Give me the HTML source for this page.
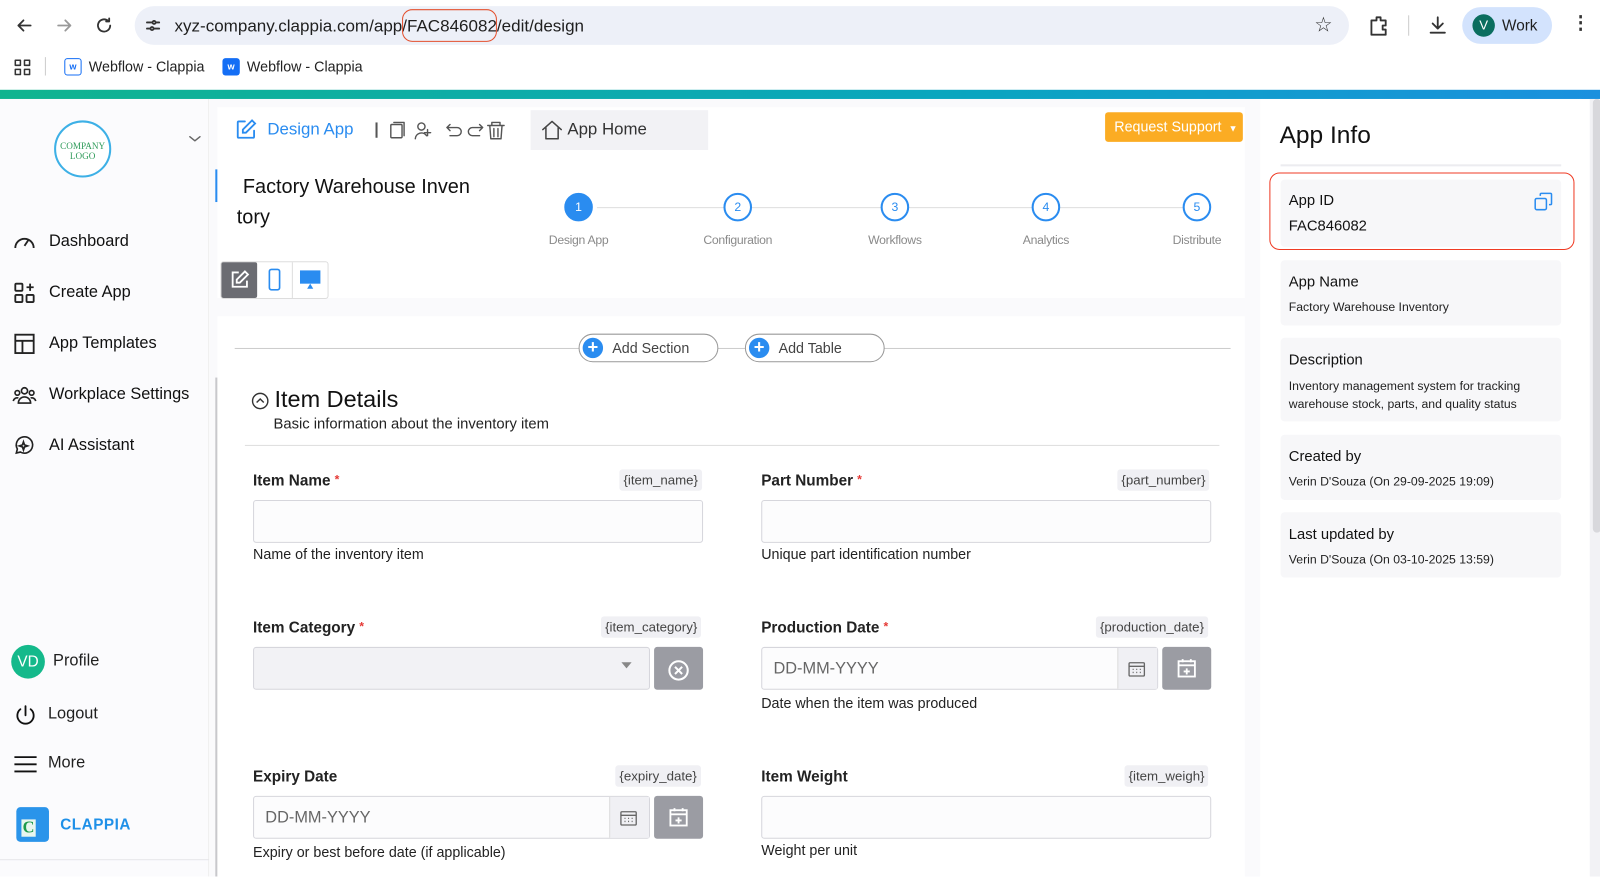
<!DOCTYPE html>
<html><head><meta charset="utf-8">
<style>
*{box-sizing:border-box;margin:0;padding:0}
html,body{width:1600px;height:876px;overflow:hidden}
body{font-family:"Liberation Sans",Arial,sans-serif;background:#fff;color:#1f1f1f}
#w{position:absolute;left:0;top:0;width:1568px;height:859px;transform:scale(1.0204);transform-origin:0 0;overflow:hidden}
.abs{position:absolute}
.ic{position:absolute;fill:none;stroke:#333;stroke-width:1.8;stroke-linecap:round;stroke-linejoin:round}
.nav{position:absolute;left:12px;font-size:16px;color:#111;display:flex;align-items:center;gap:12px}
.lbl{position:absolute;font-size:15px;font-weight:bold;color:#222}
.req{color:#e53935;font-size:12px;vertical-align:top;margin-left:4px}
.tag{position:absolute;font-size:13px;color:#444;background:#f0f0f4;padding:3px 4px;border-radius:3px}
.inp{position:absolute;height:42px;border:1px solid #d6d6dc;border-radius:3px;background:#fcfcfd}
.help{position:absolute;font-size:14px;color:#222}
.card{position:absolute;left:1255px;width:275px;background:#f7f7f9;border-radius:4px}
.card .t{position:absolute;left:8px;font-size:14.5px;color:#111}
.card .v{position:absolute;left:8px;font-size:12px;color:#222;line-height:18px}
.step{position:absolute;width:28px;height:28px;border-radius:50%;border:2px solid #2a8cf0;color:#2a8cf0;font-size:12px;display:flex;align-items:center;justify-content:center;background:#fff;top:189px}
.sl{position:absolute;top:228px;font-size:12px;color:#8a8a8a;transform:translateX(-50%);letter-spacing:-0.3px}
.btn{position:absolute;background:#9b9ca3;border-radius:3px;width:48px;height:42px}
</style></head><body><div id="w">
<div class="abs" style="left:0;top:0;width:1600px;height:88px;background:#fff"></div>
<svg class="ic" style="left:14px;top:15px" width="20" height="20" viewBox="0 0 20 20"><path d="M16 10H4M9 5l-5 5 5 5"/></svg>
<svg class="ic" style="left:53px;top:15px;stroke:#999" width="20" height="20" viewBox="0 0 20 20"><path d="M4 10h12M11 5l5 5-5 5"/></svg>
<svg class="ic" style="left:92px;top:15px" width="20" height="20" viewBox="0 0 20 20"><path d="M16 10a6 6 0 1 1-2-4.5M15 3v3h-3"/></svg>
<div class="abs" style="left:132px;top:6px;width:1190px;height:38px;border-radius:19px;background:#edf0f8"></div>
<svg class="ic" style="left:140px;top:15px" width="20" height="20" viewBox="0 0 20 20"><path d="M4 7h5M13 7h3M4 13h3M11 13h5"/><circle cx="11" cy="7" r="1.5"/><circle cx="9" cy="13" r="1.5"/></svg>
<div class="abs" style="left:171px;top:16px;font-size:16.7px;color:#1f1f1f">xyz-company.clappia.com/app/FAC846082/edit/design</div>
<div class="abs" style="left:394px;top:9px;width:93px;height:32px;border:1.5px solid #e4502e;border-radius:10px"></div>
<div class="abs" style="left:1288px;top:12px;font-size:20px;color:#333">☆</div>
<svg class="ic" style="left:1340px;top:14px" width="22" height="22" viewBox="0 0 22 22"><path d="M4 6h5V3h4v3h5v5h-3v4h3v5H4z"/></svg>
<div class="abs" style="left:1380px;top:15px;width:1px;height:20px;background:#ccc"></div>
<svg class="ic" style="left:1398px;top:14px" width="22" height="22" viewBox="0 0 22 22"><path d="M11 3v11M6 9l5 5 5-5M4 18h14"/></svg>
<div class="abs" style="left:1433px;top:7px;width:88px;height:36px;border-radius:18px;background:#d3e3fd"></div>
<div class="abs" style="left:1443px;top:14px;width:22px;height:22px;border-radius:50%;background:#0b6e5f;color:#fff;font-size:13px;text-align:center;line-height:22px">V</div>
<div class="abs" style="left:1472px;top:17px;font-size:15px;color:#1f1f1f">Work</div>
<div class="abs" style="left:1540px;top:12px;font-size:18px;color:#333;font-weight:bold">⋮</div>
<svg class="ic" style="left:13px;top:57px;stroke-width:1.5" width="18" height="18" viewBox="0 0 18 18"><rect x="2" y="2" width="5" height="5"/><rect x="11" y="2" width="5" height="5"/><rect x="2" y="11" width="5" height="5"/><rect x="11" y="11" width="5" height="5"/></svg>
<div class="abs" style="left:44px;top:56px;width:1px;height:18px;background:#ccc"></div>
<div class="abs" style="left:63px;top:57px;width:17px;height:17px;background:#fff;border:1.5px solid #146ef5;border-radius:3px;color:#146ef5;font-size:9px;font-weight:bold;text-align:center;line-height:14px">w</div>
<div class="abs" style="left:87px;top:57px;font-size:14px;color:#222">Webflow - Clappia</div>
<div class="abs" style="left:218px;top:57px;width:17px;height:17px;background:#146ef5;border-radius:3px;color:#fff;font-size:9px;font-weight:bold;text-align:center;line-height:17px">w</div>
<div class="abs" style="left:242px;top:57px;font-size:14px;color:#222">Webflow - Clappia</div>
<div class="abs" style="left:0;top:88px;width:1600px;height:9px;background:linear-gradient(90deg,#10b48f,#0aa5c0 60%,#1c8fe0)"></div>
<div class="abs" style="left:1558px;top:97px;width:42px;height:779px;background:#f2f2f5"></div>
<div class="abs" style="left:1561px;top:97px;width:8px;height:425px;background:#d8d8dc;border-radius:4px"></div>
<div class="abs" style="left:0;top:97px;width:205px;height:779px;background:#fbfbfd;border-right:1px solid #eee"></div>
<div class="abs" style="left:53px;top:118px;width:56px;height:56px;border-radius:50%;border:2px solid #3db0e6;background:#fff;color:#2f9b5a;font-family:'Liberation Serif',serif;font-size:9px;text-align:center;padding-top:18px;line-height:10px">COMPANY<br>LOGO</div>
<svg class="ic" style="left:184px;top:131px;stroke:#666;stroke-width:1.4" width="14" height="10" viewBox="0 0 14 10"><path d="M2 3l5 4 5-4"/></svg>
<div class="nav" style="top:226px"><svg width="24" height="22" viewBox="0 0 24 22" style="fill:none;stroke:#222;stroke-width:1.8"><path d="M3 17a9 9 0 1 1 18 0"/><path d="M12 15l4-6"/></svg>Dashboard</div>
<div class="nav" style="top:276px"><svg width="24" height="22" viewBox="0 0 24 22" style="fill:none;stroke:#222;stroke-width:1.8"><rect x="3" y="2" width="7" height="7" rx="1"/><rect x="3" y="13" width="7" height="7" rx="1"/><rect x="14" y="13" width="7" height="7" rx="1"/><path d="M17.5 2v7M14 5.5h7"/></svg>Create App</div>
<div class="nav" style="top:326px"><svg width="24" height="22" viewBox="0 0 24 22" style="fill:none;stroke:#222;stroke-width:1.8"><rect x="3" y="2" width="18" height="18"/><path d="M3 8h18M10 8v12"/></svg>App Templates</div>
<div class="nav" style="top:376px"><svg width="24" height="22" viewBox="0 0 24 22" style="fill:none;stroke:#222;stroke-width:1.6"><circle cx="12" cy="7" r="3"/><circle cx="5" cy="9" r="2.3"/><circle cx="19" cy="9" r="2.3"/><path d="M6 19a6 6 0 0 1 12 0zM1 17a4 4 0 0 1 5-3M23 17a4 4 0 0 0-5-3"/></svg>Workplace Settings</div>
<div class="nav" style="top:426px"><svg width="24" height="22" viewBox="0 0 24 22" style="fill:none;stroke:#222;stroke-width:1.6"><path d="M4 18l1-4a8 8 0 1 1 3 3z"/><path d="M11 7l1 3 3 1-3 1-1 3-1-3-3-1 3-1z"/></svg>AI Assistant</div>
<div class="abs" style="left:11px;top:632px;width:33px;height:33px;border-radius:50%;background:#14b98b;color:#fff;font-size:15px;text-align:center;line-height:33px">VD</div>
<div class="abs" style="left:52px;top:639px;font-size:16px">Profile</div>
<svg class="abs" style="left:13px;top:689px" width="24" height="24" viewBox="0 0 24 24" fill="none" stroke="#111" stroke-width="1.8" stroke-linecap="round"><path d="M12 3v9M7 6a8 8 0 1 0 10 0"/></svg>
<div class="abs" style="left:47px;top:691px;font-size:16px">Logout</div>
<svg class="abs" style="left:14px;top:740px" width="22" height="18" viewBox="0 0 22 18" stroke="#111" stroke-width="1.8"><path d="M0 2h22M0 9h22M0 16h22"/></svg>
<div class="abs" style="left:47px;top:739px;font-size:16px">More</div>
<div class="abs" style="left:16px;top:791px;width:32px;height:34px;background:#2a94ea;border-radius:4px"></div>
<div class="abs" style="left:21px;top:803px;width:14px;height:17px;background:#e8f6ee;color:#1e9b4d;font-weight:bold;font-family:'Liberation Serif',serif;font-size:16px;line-height:17px;text-align:center">C</div>
<div class="abs" style="left:59px;top:800px;font-size:15px;font-weight:bold;color:#1e90e8;letter-spacing:.5px">CLAPPIA</div>
<div class="abs" style="left:0;top:842px;width:205px;height:1px;background:#e6e6ea"></div>
<div class="abs" style="left:205px;top:97px;width:1030px;height:779px;background:#fafafc"></div>
<div class="abs" style="left:213px;top:105px;width:1007px;height:187px;background:#fff"></div>
<svg class="abs" style="left:230px;top:116px" width="22" height="22" viewBox="0 0 22 22" fill="none" stroke="#2a8cf0" stroke-width="1.8" stroke-linecap="round"><path d="M10 3H4a1 1 0 0 0-1 1v14a1 1 0 0 0 1 1h14a1 1 0 0 0 1-1v-6"/><path d="M17 2l3 3-9 9H8v-3z"/></svg>
<div class="abs" style="left:262px;top:118px;font-size:16.5px;color:#2a8cf0">Design App</div>
<div class="abs" style="left:368px;top:120px;width:2px;height:15px;background:#555"></div>
<svg class="ic" style="left:378px;top:117px;stroke:#555;stroke-width:1.4" width="120" height="22" viewBox="0 0 120 22"><rect x="5" y="5" width="11" height="13" rx="1"/><path d="M8 3h10v13"/><circle cx="35" cy="7" r="3.5"/><path d="M29 19a6 6 0 0 1 11-3M41 10v6M38 13h6"/><path d="M60 8h10a4 4 0 0 1 0 8h-7M60 8l3-3M60 8l3 3"/><path d="M95 8H85a4 4 0 0 0 0 8h7M95 8l-3-3M95 8l-3 3"/><path d="M100 6h16M104 6V3h8v3M102 6l1 13h10l1-13M106 9v8M110 9v8"/></svg>
<div class="abs" style="left:520px;top:108px;width:174px;height:39px;background:#f2f2f5"></div>
<svg class="ic" style="left:530px;top:116px;stroke:#444;stroke-width:1.5" width="22" height="22" viewBox="0 0 22 22"><path d="M2 11L11 3l9 8M5 9v11h12V9"/></svg>
<div class="abs" style="left:556px;top:118px;font-size:16.5px;color:#333">App Home</div>
<div class="abs" style="left:1083px;top:110px;width:135px;height:29px;background:#fbac23;border-radius:3px;color:#fff;font-size:14px;line-height:29px;padding-left:9px">Request Support <span style="font-size:9px;margin-left:3px">▼</span></div>
<div class="abs" style="left:211px;top:166px;width:2px;height:32px;background:#2a8cf0"></div>
<div class="abs" style="left:238px;top:168px;font-size:19.5px;color:#111;line-height:30px">Factory Warehouse Inven</div>
<div class="abs" style="left:232px;top:198px;font-size:19.5px;color:#111;line-height:30px">tory</div>
<div class="abs" style="left:585px;top:203px;width:575px;height:1px;background:#ddd"></div>
<div class="step" style="left:553px;background:#2a8cf0;color:#fff">1</div>
<div class="step" style="left:709px">2</div>
<div class="step" style="left:863px">3</div>
<div class="step" style="left:1011px">4</div>
<div class="step" style="left:1159px">5</div>
<div class="sl" style="left:567px">Design App</div>
<div class="sl" style="left:723px">Configuration</div>
<div class="sl" style="left:877px">Workflows</div>
<div class="sl" style="left:1025px">Analytics</div>
<div class="sl" style="left:1173px">Distribute</div>
<div class="abs" style="left:216px;top:256px;width:106px;height:37px;border:1px solid #ddd;border-radius:3px;background:#fff"></div>
<div class="abs" style="left:217px;top:257px;width:35px;height:35px;background:#6b6c72;border-radius:2px"></div>
<svg class="abs" style="left:225px;top:264px" width="20" height="20" viewBox="0 0 20 20" fill="none" stroke="#fff" stroke-width="1.8"><path d="M9 3H3v14h14v-6"/><path d="M15 2l3 3-8 8H7v-3z"/></svg>
<svg class="abs" style="left:262px;top:263px" width="14" height="22" viewBox="0 0 14 22" fill="none" stroke="#2a8cf0" stroke-width="1.6"><rect x="2" y="1" width="10" height="20" rx="2"/></svg>
<div class="abs" style="left:286px;top:257px;width:1px;height:35px;background:#ddd"></div>
<svg class="abs" style="left:293px;top:264px" width="22" height="20" viewBox="0 0 22 20"><rect x="1" y="1" width="20" height="13" fill="#2a8cf0"/><path d="M8 19l3-5 3 5z" fill="#2a8cf0"/></svg>
<div class="abs" style="left:213px;top:310px;width:1007px;height:566px;background:#fff"></div>
<div class="abs" style="left:211px;top:370px;width:2px;height:506px;background:#c8c8cc"></div>
<div class="abs" style="left:230px;top:341px;width:976px;height:1px;background:#ccc"></div>
<div class="abs" style="left:567px;top:327px;width:137px;height:28px;border:1px solid #999;border-radius:14px;background:#fff;font-size:14px;color:#444;line-height:26px;padding-left:32px">Add Section</div>
<div class="abs" style="left:571px;top:331px;width:20px;height:20px;border-radius:50%;background:#2a8cf0;color:#fff;font-size:18px;line-height:19px;text-align:center;font-weight:bold">+</div>
<div class="abs" style="left:730px;top:327px;width:137px;height:28px;border:1px solid #999;border-radius:14px;background:#fff;font-size:14px;color:#444;line-height:26px;padding-left:32px">Add Table</div>
<div class="abs" style="left:734px;top:331px;width:20px;height:20px;border-radius:50%;background:#2a8cf0;color:#fff;font-size:18px;line-height:19px;text-align:center;font-weight:bold">+</div>
<svg class="abs" style="left:246px;top:384px" width="18" height="18" viewBox="0 0 18 18" fill="none" stroke="#333" stroke-width="1.4"><circle cx="9" cy="9" r="7.5"/><path d="M5.5 10.5L9 7l3.5 3.5"/></svg>
<div class="abs" style="left:269px;top:378px;font-size:23px;color:#111">Item Details</div>
<div class="abs" style="left:268px;top:408px;font-size:14.5px;color:#222">Basic information about the inventory item</div>
<div class="abs" style="left:240px;top:436px;width:955px;height:1px;background:#ddd"></div>
<div class="lbl" style="left:248px;top:463px">Item Name<span class="req">*</span></div>
<div class="tag" style="left:607px;top:460px">{item_name}</div>
<div class="inp" style="left:248px;top:490px;width:441px"></div>
<div class="help" style="left:248px;top:535px">Name of the inventory item</div>
<div class="lbl" style="left:746px;top:463px">Part Number<span class="req">*</span></div>
<div class="tag" style="left:1095px;top:460px">{part_number}</div>
<div class="inp" style="left:746px;top:490px;width:441px"></div>
<div class="help" style="left:746px;top:535px">Unique part identification number</div>
<div class="lbl" style="left:248px;top:607px">Item Category<span class="req">*</span></div>
<div class="tag" style="left:589px;top:604px">{item_category}</div>
<div class="inp" style="left:248px;top:634px;width:389px;background:#f2f2f5"></div>
<div class="abs" style="left:609px;top:649px;border-left:5px solid transparent;border-right:5px solid transparent;border-top:6px solid #888"></div>
<div class="btn" style="left:641px;top:634px"></div>
<svg class="abs" style="left:653px;top:645px" width="24" height="24" viewBox="0 0 24 24" fill="none" stroke="#fff" stroke-width="2"><circle cx="12" cy="12" r="9"/><path d="M8.5 8.5l7 7M15.5 8.5l-7 7"/></svg>
<div class="lbl" style="left:746px;top:607px">Production Date<span class="req">*</span></div>
<div class="tag" style="left:1074px;top:604px">{production_date}</div>
<div class="inp" style="left:746px;top:634px;width:389px"></div>
<div class="abs" style="left:758px;top:647px;font-size:16px;color:#666">DD-MM-YYYY</div>
<div class="abs" style="left:1095px;top:635px;width:39px;height:40px;background:#f0f0f4;border-left:1px solid #ddd"></div>
<svg class="abs" style="left:1105px;top:647px" width="18" height="17" viewBox="0 0 18 17" fill="none" stroke="#666" stroke-width="1.3"><rect x="1.5" y="2.5" width="15" height="13" rx="1"/><path d="M1.5 6h15M5 9h1M8.5 9h1M12 9h1M5 12h1M8.5 12h1M12 12h1"/></svg>
<div class="btn" style="left:1139px;top:634px"></div>
<svg class="abs" style="left:1153px;top:645px" width="20" height="20" viewBox="0 0 20 20" fill="none" stroke="#fff" stroke-width="1.8"><rect x="2" y="3" width="16" height="15"/><path d="M2 7h16M6 1v3M14 1v3M10 10v6M7 13h6"/></svg>
<div class="help" style="left:746px;top:681px">Date when the item was produced</div>
<div class="lbl" style="left:248px;top:753px">Expiry Date</div>
<div class="tag" style="left:603px;top:750px">{expiry_date}</div>
<div class="inp" style="left:248px;top:780px;width:389px"></div>
<div class="abs" style="left:260px;top:793px;font-size:16px;color:#666">DD-MM-YYYY</div>
<div class="abs" style="left:597px;top:781px;width:39px;height:40px;background:#f0f0f4;border-left:1px solid #ddd"></div>
<svg class="abs" style="left:607px;top:793px" width="18" height="17" viewBox="0 0 18 17" fill="none" stroke="#666" stroke-width="1.3"><rect x="1.5" y="2.5" width="15" height="13" rx="1"/><path d="M1.5 6h15M5 9h1M8.5 9h1M12 9h1M5 12h1M8.5 12h1M12 12h1"/></svg>
<div class="btn" style="left:641px;top:780px"></div>
<svg class="abs" style="left:655px;top:791px" width="20" height="20" viewBox="0 0 20 20" fill="none" stroke="#fff" stroke-width="1.8"><rect x="2" y="3" width="16" height="15"/><path d="M2 7h16M6 1v3M14 1v3M10 10v6M7 13h6"/></svg>
<div class="help" style="left:248px;top:827px">Expiry or best before date (if applicable)</div>
<div class="lbl" style="left:746px;top:753px">Item Weight</div>
<div class="tag" style="left:1102px;top:750px">{item_weigh}</div>
<div class="inp" style="left:746px;top:780px;width:441px"></div>
<div class="help" style="left:746px;top:825px">Weight per unit</div>
<div class="abs" style="left:1235px;top:97px;width:315px;height:779px;background:#fff"></div>
<div class="abs" style="left:1254px;top:119px;font-size:24px;color:#111">App Info</div>
<div class="abs" style="left:1255px;top:161px;width:275px;height:2px;background:#ececf0"></div>
<div class="card" style="top:176px;height:66px"><div class="t" style="top:13px">App ID</div><div class="t" style="top:38px">FAC846082</div></div>
<svg class="abs" style="left:1503px;top:188px" width="20" height="20" viewBox="0 0 20 20" fill="none" stroke="#2a8cf0" stroke-width="1.5"><rect x="1.5" y="6.5" width="11" height="11" rx="1.5"/><path d="M6.5 4V2.5a1 1 0 0 1 1-1h9a1 1 0 0 1 1 1v9a1 1 0 0 1-1 1H15"/></svg>
<div class="abs" style="left:1244px;top:169px;width:299px;height:76px;border:1.5px solid #ef3b24;border-radius:10px"></div>
<div class="card" style="top:255px;height:64px"><div class="t" style="top:14px">App Name</div><div class="v" style="top:37px">Factory Warehouse Inventory</div></div>
<div class="card" style="top:331px;height:82px"><div class="t" style="top:14px">Description</div><div class="v" style="top:38px">Inventory management system for tracking<br>warehouse stock, parts, and quality status</div></div>
<div class="card" style="top:426px;height:64px"><div class="t" style="top:14px">Created by</div><div class="v" style="top:37px">Verin D'Souza (On 29-09-2025 19:09)</div></div>
<div class="card" style="top:502px;height:64px"><div class="t" style="top:14px">Last updated by</div><div class="v" style="top:37px">Verin D'Souza (On 03-10-2025 13:59)</div></div>
</div></body></html>
